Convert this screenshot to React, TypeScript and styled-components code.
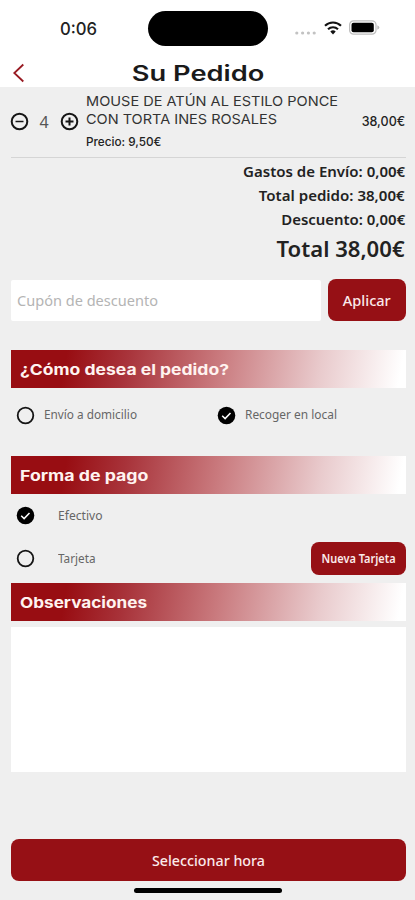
import React from 'react';
import styled, { createGlobalStyle } from 'styled-components';

const RED = '#961015';
const WIDE = 'Inter, "Liberation Sans", sans-serif';
const BODY = '"Noto Sans", "Open Sans", sans-serif';

const GlobalStyle = createGlobalStyle`
  *, *::before, *::after { box-sizing: border-box; }
  body { margin: 0; background: #efefef; }
  button { font: inherit; }
`;

const Screen = styled.main`
  width: 415px;
  height: 900px;
  display: flex;
  flex-direction: column;
  background: #efefef;
  font-family: ${BODY};
  color: #222;
  overflow: hidden;
`;

/* Text with a condensed or extended width around the given edge. */
const Label = styled.span<{ $stretch?: number; $origin?: 'left' | 'center' | 'right' }>`
  display: inline-block;
  white-space: nowrap;
  transform: scaleX(${(p) => p.$stretch ?? 1});
  transform-origin: ${(p) => p.$origin ?? 'left'} center;
`;

const StatusBar = styled.header`
  display: grid;
  grid-template-columns: 148px 120px 1fr;
  align-items: center;
  height: 57px;
  flex: none;
  background: #fff;
`;
const Clock = styled.div`
  padding-left: 59.5px;
  font: 500 17px/20px ${WIDE};
  color: #222;
`;
const Island = styled.div`
  height: 35px;
  border-radius: 18px;
  background: #000;
`;
const StatusIcons = styled.div`
  display: flex;
  align-items: center;
  padding-left: 27px;
  height: 20px;
  margin-top: -2px;
`;
const Signal = styled.svg`
  margin: 10px 8px 0 0;
`;
const Battery = styled.svg`
  margin-left: 7px;
`;

const TitleBar = styled.div`
  display: grid;
  grid-template-columns: 40px 1fr 59px;
  align-items: center;
  height: 30px;
  flex: none;
  background: #fff;
`;
const BackButton = styled.button`
  display: flex;
  padding: 2px 0 0 12px;
  border: 0;
  background: none;
`;
const Title = styled.h1`
  margin: 3px 0 0;
  text-align: center;
  font: 600 21px/27px ${WIDE};
  color: #1a1a1a;
`;

const Content = styled.div`
  flex: 1;
  display: flex;
  flex-direction: column;
  padding: 0 9.5px 0 10.5px;
`;

const OrderItem = styled.section`
  display: flex;
  height: 71px;
  border-bottom: 1px solid #d5d5d5;
`;
const Stepper = styled.div`
  display: flex;
  align-items: center;
  justify-content: space-between;
  width: 69px;
  margin: 25px 7.5px 0 -1px;
  height: 19px;
  font-size: 16px;
  color: #555;
`;
const StepButton = styled.button`
  display: flex;
  padding: 0;
  border: 0;
  background: none;
`;
const ItemInfo = styled.div`
  flex: 1;
  padding-top: 6px;
`;
const ItemName = styled.div`
  font: 400 13.5px/17.5px ${WIDE};
  color: #333;
`;
const UnitPrice = styled.div`
  margin-top: 5px;
  font: 500 12px/17px ${WIDE};
`;
const LinePrice = styled.div`
  margin-top: 25px;
  font: 500 13px/18px ${WIDE};
`;

const Totals = styled.section`
  display: flex;
  flex-direction: column;
  align-items: flex-end;
  height: 121px;
  padding: 2px 0.5px 0 0;
`;
const TotalLine = styled.div`
  font-size: 14px;
  font-weight: 600;
  line-height: 24px;
`;
const GrandTotal = styled.div`
  font-size: 21px;
  font-weight: 600;
  line-height: 34px;
`;

const CouponRow = styled.form`
  display: flex;
  justify-content: space-between;
  height: 42px;
`;
const CouponField = styled.div`
  width: 310px;
  height: 41px;
  margin-top: 1px;
  padding: 0 6px;
  border-radius: 2px;
  background: #fff;
  color: #b4b4b4;
  font-size: 15px;
  line-height: 40px;
`;
const ActionButton = styled.button<{ $width: string; $height: number; $size: number; $weight?: number }>`
  display: flex;
  align-items: center;
  justify-content: center;
  flex: none;
  width: ${(p) => p.$width};
  height: ${(p) => p.$height}px;
  padding: 0;
  border: 0;
  border-radius: 8px;
  background: ${RED};
  color: #fbeaea;
  font-family: ${BODY};
  font-size: ${(p) => p.$size}px;
  font-weight: ${(p) => p.$weight ?? 500};
`;

const SectionHeading = styled.h2<{ $gap: number }>`
  flex: none;
  height: 38px;
  margin: ${(p) => p.$gap}px 0 0;
  padding: 1px 0 0 9.5px;
  background: linear-gradient(100deg, #980d12 0%, #980d12 14%, #a8333a 29%, #c9797d 52%, #e9cbcd 78%, #fff 98%);
  color: #fff3f0;
  font: 700 15px/37px ${WIDE};
`;

const Delivery = styled.div`
  display: grid;
  grid-template-columns: 201px 1fr;
  height: 68px;
  padding: 17px 0 0 5.5px;
`;
const Payments = styled.div`
  display: flex;
  flex-direction: column;
  height: 89px;
`;
const PaymentRow = styled.div`
  display: flex;
  align-items: center;
  height: 43px;
  padding-left: 5.5px;
  justify-content: space-between;
`;
const Option = styled.div<{ $gap: number }>`
  display: flex;
  align-items: center;
  gap: ${(p) => p.$gap}px;
  height: 20px;
  color: #666;
  font-size: 12.5px;
  line-height: 20px;
`;
const Notes = styled.div`
  flex: none;
  height: 145px;
  margin-top: 6px;
  background: #fff;
`;
const Footer = styled.footer`
  display: flex;
  flex-direction: column;
  align-items: center;
  margin-top: 67px;
`;
const HomeIndicator = styled.div`
  width: 148px;
  height: 5px;
  margin-top: 7px;
  border-radius: 3px;
  background: #000;
`;

const StepIcon = ({ plus }: { plus?: boolean }) => (
  <svg width="19" height="19" viewBox="0 0 19 19" fill="none" stroke="#151515" strokeWidth="2">
    <circle cx="9.5" cy="9.5" r="7.8" />
    <path d={plus ? 'M5.5 9.5h8M9.5 5.5v8' : 'M5.5 9.5h8'} strokeWidth={plus ? 2 : 1.5} />
  </svg>
);

const Radio = ({ checked }: { checked?: boolean }) => (
  <svg width="19" height="19" viewBox="0 0 19 19" fill="none">
    {checked ? (
      <>
        <circle cx="9.5" cy="9.5" r="8.8" fill="#000" />
        <path d="M5.2 9.8l2.9 2.8 5.4-5.7" stroke="#fff" strokeWidth="1.5" />
      </>
    ) : (
      <circle cx="9.5" cy="9.5" r="7.8" stroke="#151515" strokeWidth="1.8" />
    )}
  </svg>
);

export default function App() {
  return (
    <Screen>
      <GlobalStyle />
      <StatusBar>
        <Clock><Label $stretch={0.98}>0:06</Label></Clock>
        <Island />
        <StatusIcons>
          <Signal width="21" height="4" viewBox="0 0 21 4" fill="#c2c2c2">
            <circle cx="1.8" cy="2" r="1.6" />
            <circle cx="7.6" cy="2" r="1.6" />
            <circle cx="13.4" cy="2" r="1.6" />
            <circle cx="19.2" cy="2" r="1.6" />
          </Signal>
          <svg width="18" height="14" viewBox="0 0 18 14" fill="none" stroke="#111" strokeWidth="2.1">
            <path d="M1 4.8a11.5 11.5 0 0 1 16 0M4 8.2a7.2 7.2 0 0 1 10 0" />
            <path d="M6.3 10.6a3.9 3.9 0 0 1 5.4 0L9 13.4z" fill="#111" stroke="none" />
          </svg>
          <Battery width="32" height="15" viewBox="0 0 32 15">
            <rect x="0.6" y="0.8" width="26.4" height="13.4" rx="4" fill="#fff" stroke="#bdbdbd" strokeWidth="1.2" />
            <rect x="2.5" y="2.8" width="22.3" height="9.4" rx="2" fill="#000" />
            <path d="M28.3 5.2q2 .8 2 2.3t-2 2.3z" fill="#bdbdbd" />
          </Battery>
        </StatusIcons>
      </StatusBar>
      <TitleBar>
        <BackButton aria-label="Volver">
          <svg width="13" height="20" viewBox="0 0 13 20" fill="none" stroke="#981a22" strokeWidth="1.8">
            <path d="M11.3 1.5 2.3 10l9 8.5" />
          </svg>
        </BackButton>
        <Title><Label $stretch={1.298} $origin="center">Su Pedido</Label></Title>
      </TitleBar>

      <Content>
        <OrderItem>
          <Stepper>
            <StepButton aria-label="Menos"><StepIcon /></StepButton>
            <span>4</span>
            <StepButton aria-label="Más"><StepIcon plus /></StepButton>
          </Stepper>
          <ItemInfo>
            <ItemName>
              <Label $stretch={1.077}>MOUSE DE ATÚN AL ESTILO PONCE</Label>
              <br />
              <Label $stretch={1.074}>CON TORTA INES ROSALES</Label>
            </ItemName>
            <UnitPrice><Label $stretch={0.978}>Precio: 9,50€</Label></UnitPrice>
          </ItemInfo>
          <LinePrice><Label $stretch={0.963} $origin="right">38,00€</Label></LinePrice>
        </OrderItem>

        <Totals>
          <TotalLine><Label $stretch={1.072} $origin="right">Gastos de Envío: 0,00€</Label></TotalLine>
          <TotalLine><Label $stretch={1.075} $origin="right">Total pedido: 38,00€</Label></TotalLine>
          <TotalLine><Label $stretch={1.067} $origin="right">Descuento: 0,00€</Label></TotalLine>
          <GrandTotal><Label $stretch={1.053} $origin="right">Total 38,00€</Label></GrandTotal>
        </Totals>

        <CouponRow>
          <CouponField><Label $stretch={0.97}>Cupón de descuento</Label></CouponField>
          <ActionButton type="button" $width="78px" $height={42} $size={15}>
            <Label $stretch={0.97} $origin="center">Aplicar</Label>
          </ActionButton>
        </CouponRow>

        <SectionHeading $gap={29}><Label $stretch={1.169}>¿Cómo desea el pedido?</Label></SectionHeading>
        <Delivery>
          <Option $gap={8.5}><Radio /><Label $stretch={0.942}>Envío a domicilio</Label></Option>
          <Option $gap={8.5}><Radio checked /><Label $stretch={0.952}>Recoger en local</Label></Option>
        </Delivery>

        <SectionHeading $gap={0}><Label $stretch={1.182}>Forma de pago</Label></SectionHeading>
        <Payments>
          <PaymentRow>
            <Option $gap={23}><Radio checked /><Label $stretch={0.968}>Efectivo</Label></Option>
          </PaymentRow>
          <PaymentRow>
            <Option $gap={23}><Radio /><Label $stretch={0.939}>Tarjeta</Label></Option>
            <ActionButton type="button" $width="94.5px" $height={33} $size={12} $weight={600}>
              <Label $stretch={0.913} $origin="center">Nueva Tarjeta</Label>
            </ActionButton>
          </PaymentRow>
        </Payments>

        <SectionHeading $gap={0}><Label $stretch={1.144}>Observaciones</Label></SectionHeading>
        <Notes />

        <Footer>
          <ActionButton type="button" $width="100%" $height={42} $size={15}>
            <Label $stretch={0.95} $origin="center">Seleccionar hora</Label>
          </ActionButton>
          <HomeIndicator />
        </Footer>
      </Content>
    </Screen>
  );
}
